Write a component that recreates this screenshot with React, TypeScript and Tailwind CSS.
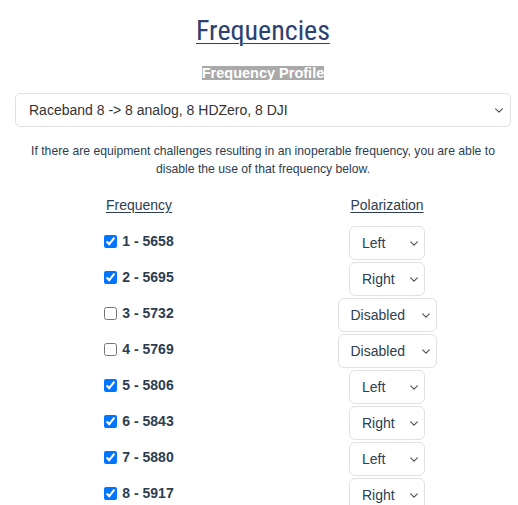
import React from 'react';

const frequencies = [
  { id: 1, mhz: 5658, enabled: true, pol: 'Left' },
  { id: 2, mhz: 5695, enabled: true, pol: 'Right' },
  { id: 3, mhz: 5732, enabled: false, pol: 'Disabled' },
  { id: 4, mhz: 5769, enabled: false, pol: 'Disabled' },
  { id: 5, mhz: 5806, enabled: true, pol: 'Left' },
  { id: 6, mhz: 5843, enabled: true, pol: 'Right' },
  { id: 7, mhz: 5880, enabled: true, pol: 'Left' },
  { id: 8, mhz: 5917, enabled: true, pol: 'Right' },
];

function Chevron({ className }: { className: string }) {
  return (
    <svg className={className} viewBox="0 0 16 16" fill="none" stroke="#4a5058" strokeWidth="2" strokeLinecap="round" strokeLinejoin="round">
      <path d="m2 5 6 6 6-6" />
    </svg>
  );
}

export default function App() {
  return (
    <div className="min-h-[505px] bg-white pl-[15px] pr-[7px] text-[#2c3e50]" style={{ fontFamily: '"Liberation Sans", Arial, sans-serif' }}>
      <h1
        className="pt-[15px] text-center text-[28px] leading-[32px] font-stretch-condensed underline decoration-1 underline-offset-[3px] text-[#2c4170]"
        style={{ fontFamily: 'Roboto, "Liberation Sans", sans-serif' }}
      >
        Frequencies
      </h1>
      <div className="mt-[19px] flex justify-center">
        <span className="inline-block h-[14px] bg-[#a9a9a9] text-[14.5px] font-bold leading-[14px] text-white">Frequency Profile</span>
      </div>
      <div className="relative mt-[13px]">
        <select
          defaultValue="raceband"
          className="h-[34px] w-full appearance-none rounded-[5px] border border-[#dee2e6] bg-white pl-[13px] pr-8 text-[14px] text-[#333]"
        >
          <option value="raceband">Raceband 8 -&gt; 8 analog, 8 HDZero, 8 DJI</option>
        </select>
        <Chevron className="pointer-events-none absolute right-[7px] top-[13px] h-[9px] w-[10px]" />
      </div>
      <p className="mt-[15px] text-center text-[12.2px] leading-[18px]">
        If there are equipment challenges resulting in an inoperable frequency, you are able to disable the use of that frequency below.
      </p>
      <div className="mt-[17px] grid grid-cols-2 text-[14px]">
        <div className="text-center leading-[20px] underline underline-offset-2">Frequency</div>
        <div className="text-center leading-[20px] underline underline-offset-2">Polarization</div>
      </div>
      <div className="mt-[10px] grid grid-cols-2">
        {frequencies.map(f => (
          <React.Fragment key={f.id}>
            <div className="flex h-[36px] items-center justify-center pb-[4px]">
              <label className="flex items-center gap-[5px] text-[14px] font-bold">
                <input type="checkbox" defaultChecked={f.enabled} className="h-[13px] w-[13px] accent-[#0075ff]" />
                {f.id} - {f.mhz}
              </label>
            </div>
            <div className="flex h-[36px] items-center justify-center">
              <div className="relative">
                <select
                  defaultValue={f.pol}
                  className={`h-[34px] appearance-none rounded-[6px] border border-[#dee2e6] bg-white pl-[12px] text-[14px] text-[#2c3e50] ${f.enabled ? 'w-[76px]' : 'w-[99px]'}`}
                >
                  {f.enabled ? (
                    <>
                      <option>Left</option>
                      <option>Right</option>
                    </>
                  ) : (
                    <option>Disabled</option>
                  )}
                </select>
                <Chevron className="pointer-events-none absolute right-[6px] top-[13px] h-[9px] w-[10px]" />
              </div>
            </div>
          </React.Fragment>
        ))}
      </div>
    </div>
  );
}
